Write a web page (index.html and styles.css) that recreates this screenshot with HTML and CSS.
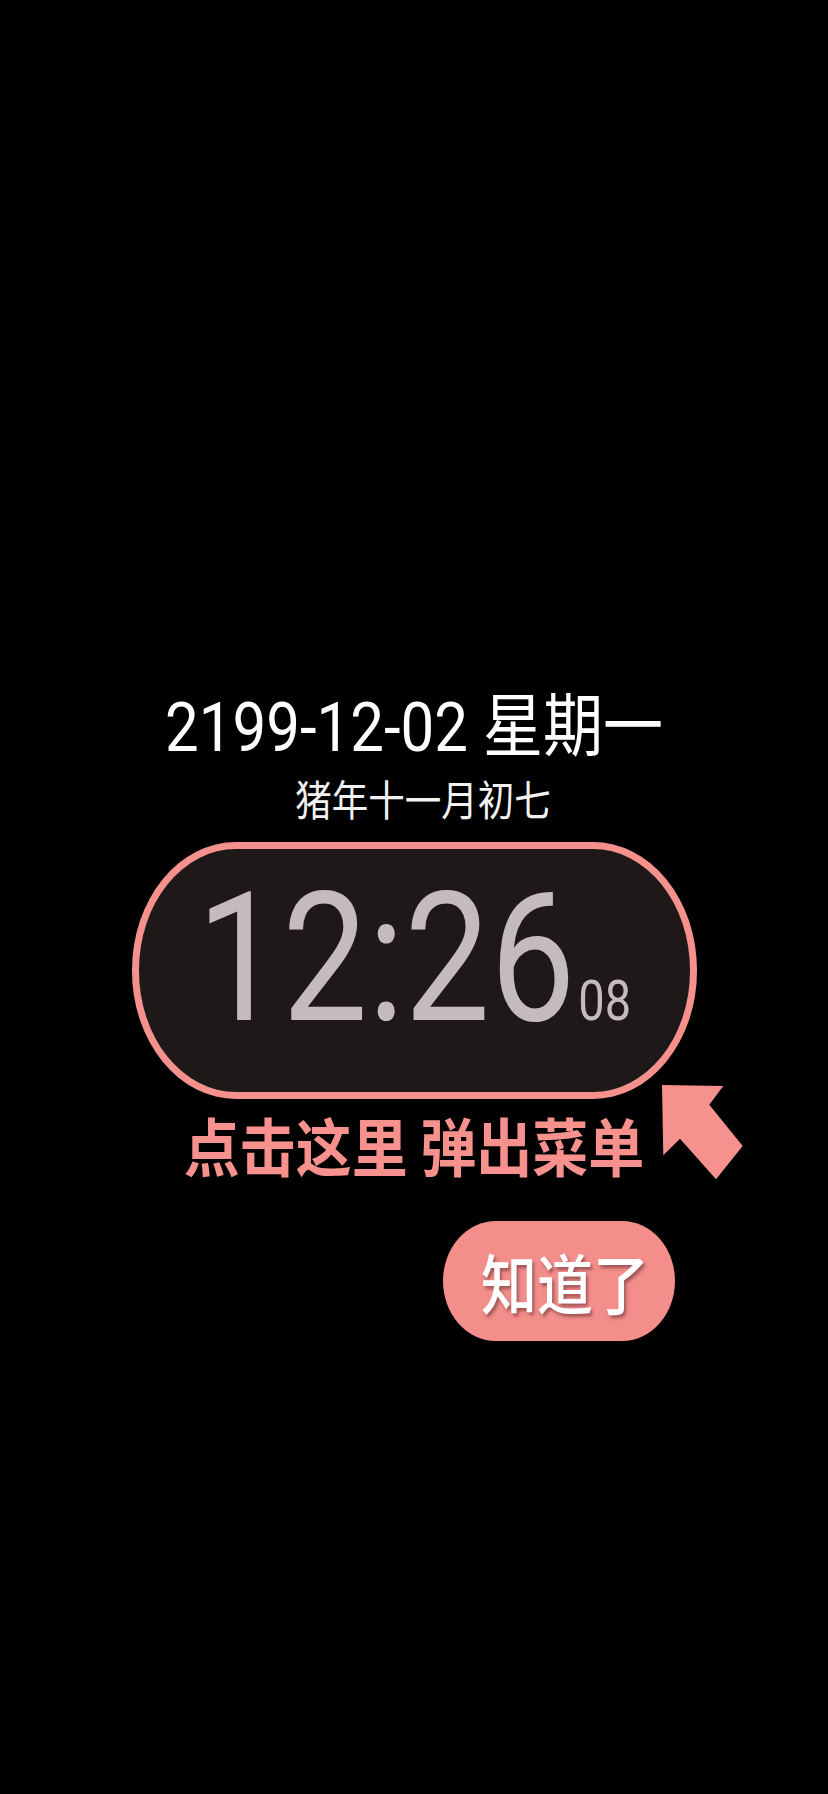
FILE: index.html
```html
<!DOCTYPE html>
<html lang="zh-CN">
<head>
<meta charset="utf-8">
<title>Clock</title>
<link rel="stylesheet" href="styles.css">
</head>
<body>
<main class="screen">
  <div class="date"><span class="date-text">2199-12-02 星期一</span></div>
  <div class="lunar"><span class="lunar-text">猪年十一月初七</span></div>
  <div class="pill">
    <div class="time">
      <span class="time-main">12:26</span><span class="time-sec">08</span>
    </div>
  </div>
  <div class="hint">
    <span class="hint-text">点击这里 弹出菜单</span>
    <svg class="arrow" width="83" height="96" viewBox="0 0 83 96" aria-hidden="true">
      <polygon points="1,1 62.3,2 48.3,20.7 81.7,62 55,95.3 19,54.7 2.3,71.3" fill="#f6918d"/>
    </svg>
  </div>
  <button class="ok-btn"><span class="ok-text">知道了</span></button>
</main>
</body>
</html>
```

FILE: styles.css
```css
html, body {
  margin: 0;
  padding: 0;
  background: #000;
}

.screen {
  width: 828px;
  height: 1794px;
  box-sizing: border-box;
  padding-top: 694px;
  display: flex;
  flex-direction: column;
  align-items: center;
  overflow: hidden;
}

.date {
  height: 68px;
  line-height: 68px;
  font-family: Roboto, "Noto Sans CJK SC", sans-serif;
  font-size: 60px;
  color: #ffffff;
  white-space: nowrap;
}

.date-text,
.lunar-text,
.hint-text,
.ok-text {
  display: inline-block;
}

.date-text {
  transform: scaleY(1.15);
}

.lunar {
  margin-top: 17px;
  margin-left: 18px;
  height: 40px;
  line-height: 40px;
  font-family: "Noto Sans CJK SC", sans-serif;
  font-size: 36.5px;
  color: #f2f2f2;
  white-space: nowrap;
}

.lunar-text {
  transform: scaleY(1.15);
}

.pill {
  margin-top: 23px;
  width: 565px;
  height: 257px;
  box-sizing: border-box;
  border: 7px solid #f5918d;
  border-radius: 104px / 128px;
  background: #1e1818;
  display: flex;
  align-items: center;
  justify-content: center;
  padding-bottom: 26px;
  padding-left: 0;
}

.time {
  display: flex;
  align-items: baseline;
  height: 150px;
  line-height: 150px;
  font-family: Roboto, sans-serif;
  color: #c4bcbc;
  transform: scaleY(1.19);
  white-space: nowrap;
}

.time-main {
  font-size: 152px;
}

.time-sec {
  font-size: 47px;
  margin-left: 3px;
}

.hint {
  position: relative;
  margin-top: 15px;
  height: 60px;
  line-height: 60px;
  font-family: "Noto Sans CJK SC", sans-serif;
  font-weight: 600;
  font-size: 56px;
  color: #f6918d;
  white-space: nowrap;
}

.hint-text {
  transform: scaleY(1.12);
}

.arrow {
  position: absolute;
  left: calc(100% + 17px);
  top: -30px;
}

.ok-btn {
  margin-top: 47px;
  align-self: flex-start;
  margin-left: 443px;
  width: 232px;
  height: 120px;
  border: none;
  padding: 0 0 0 12px;
  border-radius: 53px / 60px;
  background: #f48e8b;
  display: flex;
  align-items: center;
  justify-content: center;
  font-family: "Noto Sans CJK SC", sans-serif;
  font-weight: 500;
  font-size: 56px;
  line-height: 60px;
  color: #ffffff;
  text-shadow: 2px 3px 3px rgba(90, 40, 40, 0.55);
}

.ok-text {
  transform: scaleY(1.16);
}
```
